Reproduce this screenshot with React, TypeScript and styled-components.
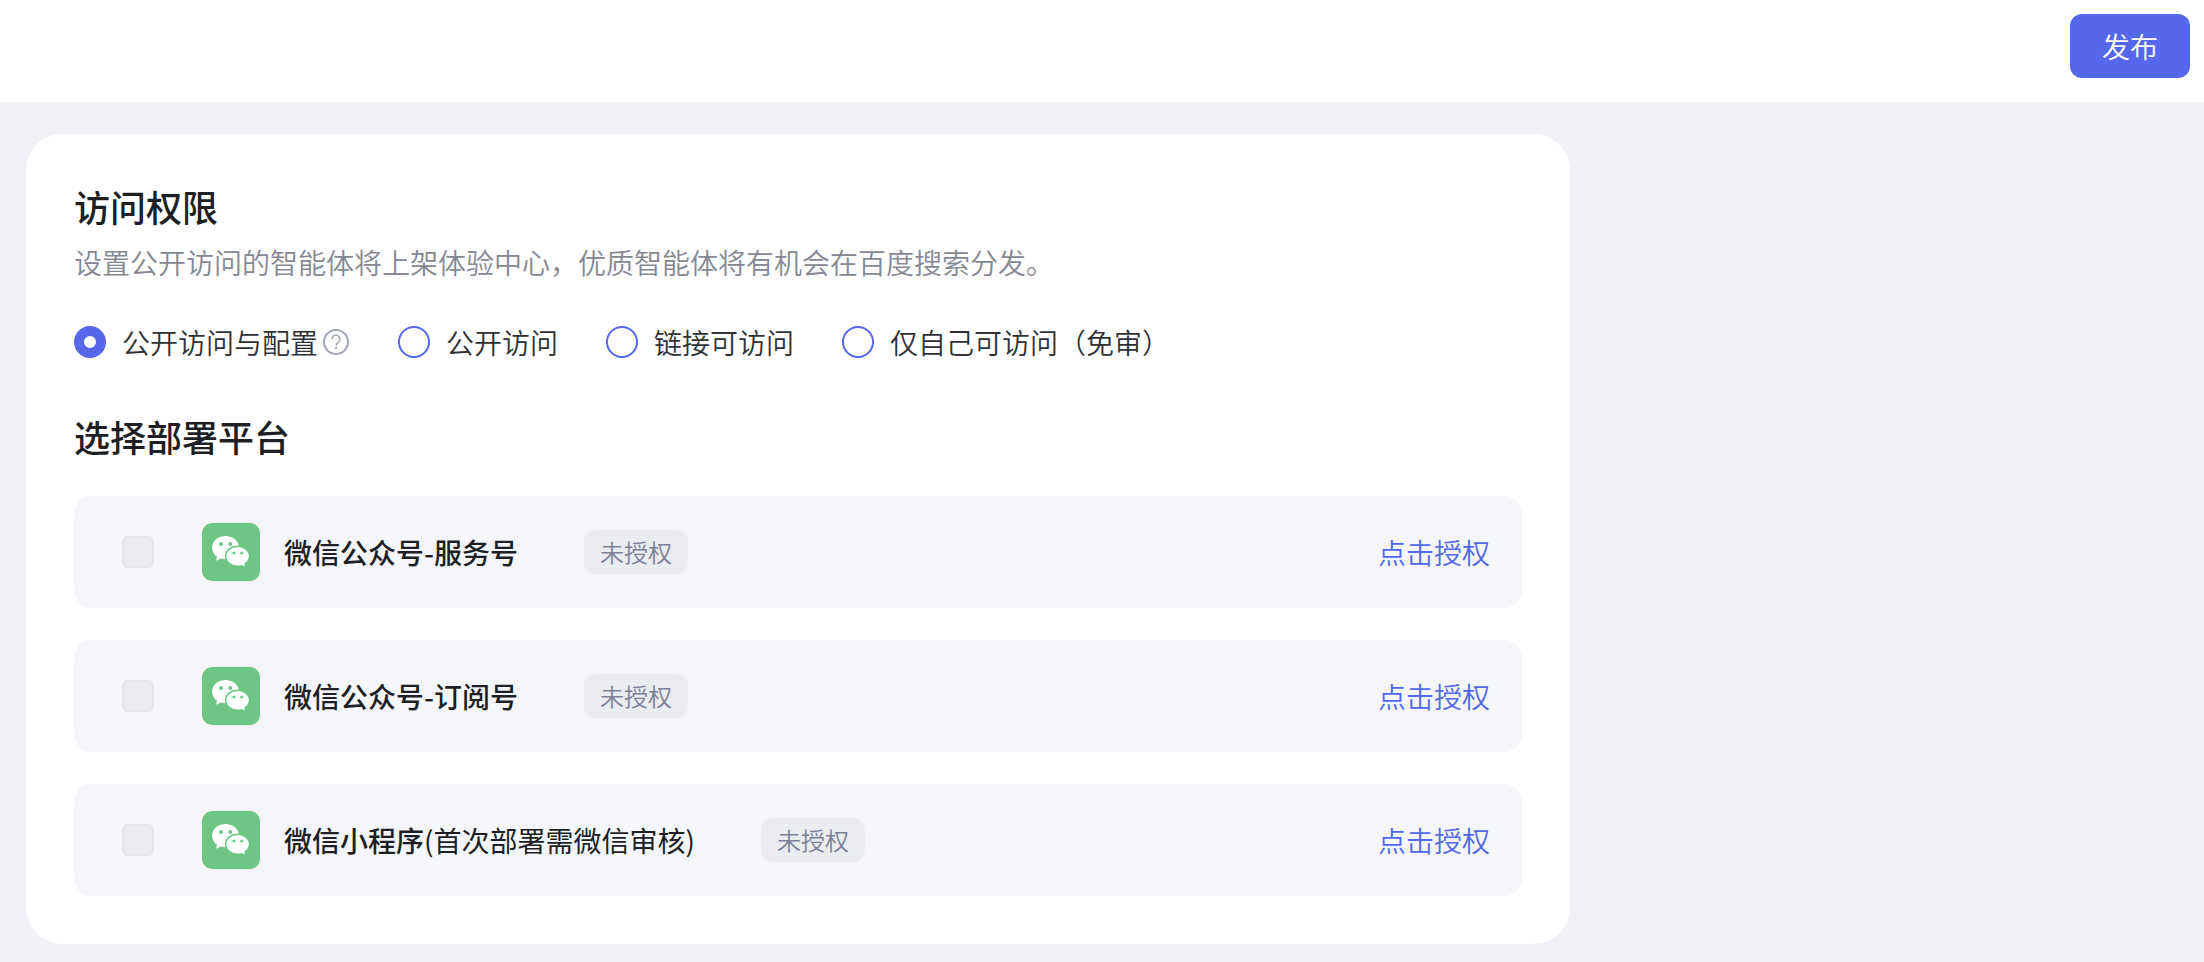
import React, { useState } from "react";
import styled, { createGlobalStyle } from "styled-components";

const GlobalStyle = createGlobalStyle`
  *, *::before, *::after { box-sizing: border-box; }
  body {
    margin: 0;
    min-height: 100vh;
    background: #f0f1f6;
    color: #1e1f24;
    font-family: "Noto Sans CJK SC", "Liberation Sans", sans-serif;
    font-size: 28px;
    font-weight: 350;
    line-height: 40px;
  }
`;

const Header = styled.header`
  display: flex;
  justify-content: flex-end;
  align-items: flex-start;
  height: 102px;
  padding: 14px 14px 0;
  background: #fff;
`;

const PublishButton = styled.button`
  height: 64px;
  padding: 0 32px;
  border: 0;
  border-radius: 12px;
  background: #5568eb;
  color: #fff;
  font: inherit;
  cursor: pointer;
`;

const Main = styled.main`
  padding: 32px 26px 18px;
`;

const Card = styled.div`
  max-width: 1544px;
  padding: 48px;
  border-radius: 36px;
  background: #fff;
`;

const Title = styled.h2`
  margin: 0;
  font-size: 36px;
  font-weight: 500;
  line-height: 48px;
`;

const Description = styled.p`
  margin: 12px 0 0;
  color: #858892;
`;

const RadioGroup = styled.div`
  display: flex;
  flex-wrap: wrap;
  gap: 48px;
  margin: 40px 0 50px;
`;

const RadioItem = styled.div`
  display: flex;
  align-items: center;
  gap: 4px;
`;

const RadioLabel = styled.label`
  display: flex;
  align-items: center;
  gap: 16px;
  color: #303134;
  cursor: pointer;
`;

const Radio = styled.input`
  appearance: none;
  width: 32px;
  height: 32px;
  margin: 0;
  border: 2px solid #5568eb;
  border-radius: 50%;
  background: #fff;
  &:checked { border-width: 10px; }
`;

const HelpButton = styled.button`
  display: flex;
  padding: 0;
  border: 0;
  background: none;
  color: #a2a8b7;
`;

const PlatformList = styled.ul`
  display: flex;
  flex-direction: column;
  gap: 32px;
  margin: 36px 0 0;
  padding: 0;
  list-style: none;
`;

const PlatformRow = styled.li`
  display: flex;
  align-items: center;
  height: 112px;
  padding: 0 32px 0 48px;
  border-radius: 18px;
  background: #f4f6fa;
`;

const PlatformLabel = styled.label`
  display: flex;
  align-items: center;
`;

const Checkbox = styled.input`
  appearance: none;
  width: 32px;
  height: 32px;
  margin: 0 48px 0 0;
  border: 2px solid #e5e6e9;
  border-radius: 6px;
  background: #ebecf0;
`;

const PlatformIcon = styled.span`
  display: flex;
  margin-right: 24px;
  border-radius: 10px;
  background: #6dc684;
  overflow: hidden;
`;

const PlatformName = styled.span`
  font-weight: 500;
`;

const PlatformNote = styled.span`
  font-weight: 400;
`;

const StatusTag = styled.span`
  height: 44px;
  margin-left: 66px;
  padding: 0 16px;
  border-radius: 12px;
  background: #ebecf0;
  color: #7c809a;
  font-size: 24px;
  line-height: 44px;
`;

const AuthorizeLink = styled.a`
  margin-left: auto;
  color: #5568eb;
  text-decoration: none;
`;

const HelpIcon = () => (
  <svg width="28" height="28" viewBox="0 0 28 28" fill="none" stroke="currentColor" aria-hidden="true">
    <circle cx="14" cy="14" r="12" strokeWidth="2" />
    <path d="M10 11.200a4 4 0 1 1 6.300 3.200c-1.500 1.100-2.200 1.800-2.200 3.600" strokeWidth="1.500" />
    <circle cx="14.100" cy="20.200" r="1.100" fill="currentColor" stroke="none" />
  </svg>
);

const WechatIcon = () => (
  <svg width="58" height="58" viewBox="0 0 58 58" aria-hidden="true">
    <path
      fill="#fff"
      d="M23.600 13C16.100 13 10 18.200 10 24.700c0 3.600 2 6.800 5.100 9l-1 4 4.800-2.300c1.500.5 3 .8 4.700.8 7.500 0 13.600-5.100 13.600-11.500S31.100 13 23.600 13z"
    />
    <path
      fill="#fff"
      stroke="#6dc684"
      strokeWidth="1.600"
      d="M35.600 23.200c-6.700 0-12 4.500-12 10.100s5.300 10.100 12 10.100c1.500 0 2.900-.2 4.200-.6l4.300 2.100-1-3.900c2.800-1.900 4.500-4.700 4.500-7.700 0-5.600-5.300-10.100-12-10.100z"
    />
    <g fill="#6dc684">
      <circle cx="19" cy="21" r="2" />
      <circle cx="28.300" cy="21" r="2" />
      <circle cx="31.900" cy="30" r="1.500" />
      <circle cx="39.700" cy="30" r="1.500" />
    </g>
  </svg>
);

const accessOptions = [
  { value: "configurable", label: "公开访问与配置", help: true },
  { value: "public", label: "公开访问" },
  { value: "link", label: "链接可访问" },
  { value: "private", label: "仅自己可访问（免审）" },
];

const platforms = [
  { id: "service", name: "微信公众号-服务号" },
  { id: "subscription", name: "微信公众号-订阅号" },
  { id: "mini", name: "微信小程序", note: "(首次部署需微信审核)" },
];

export default function App() {
  const [access, setAccess] = useState("configurable");

  return (
    <>
      <GlobalStyle />
      <Header>
        <PublishButton type="button">发布</PublishButton>
      </Header>
      <Main>
        <Card>
          <Title id="access-title">访问权限</Title>
          <Description>设置公开访问的智能体将上架体验中心，优质智能体将有机会在百度搜索分发。</Description>
          <RadioGroup role="radiogroup" aria-labelledby="access-title">
            {accessOptions.map((option) => (
              <RadioItem key={option.value}>
                <RadioLabel>
                  <Radio
                    type="radio"
                    name="access"
                    value={option.value}
                    checked={access === option.value}
                    onChange={() => setAccess(option.value)}
                  />
                  {option.label}
                </RadioLabel>
                {option.help && (
                  <HelpButton type="button" aria-label="说明">
                    <HelpIcon />
                  </HelpButton>
                )}
              </RadioItem>
            ))}
          </RadioGroup>
          <Title>选择部署平台</Title>
          <PlatformList>
            {platforms.map((platform) => (
              <PlatformRow key={platform.id}>
                <PlatformLabel>
                  <Checkbox type="checkbox" name={platform.id} disabled />
                  <PlatformIcon>
                    <WechatIcon />
                  </PlatformIcon>
                  <PlatformName>
                    {platform.name}
                    {platform.note && <PlatformNote>{platform.note}</PlatformNote>}
                  </PlatformName>
                </PlatformLabel>
                <StatusTag>未授权</StatusTag>
                <AuthorizeLink href="#">点击授权</AuthorizeLink>
              </PlatformRow>
            ))}
          </PlatformList>
        </Card>
      </Main>
    </>
  );
}
